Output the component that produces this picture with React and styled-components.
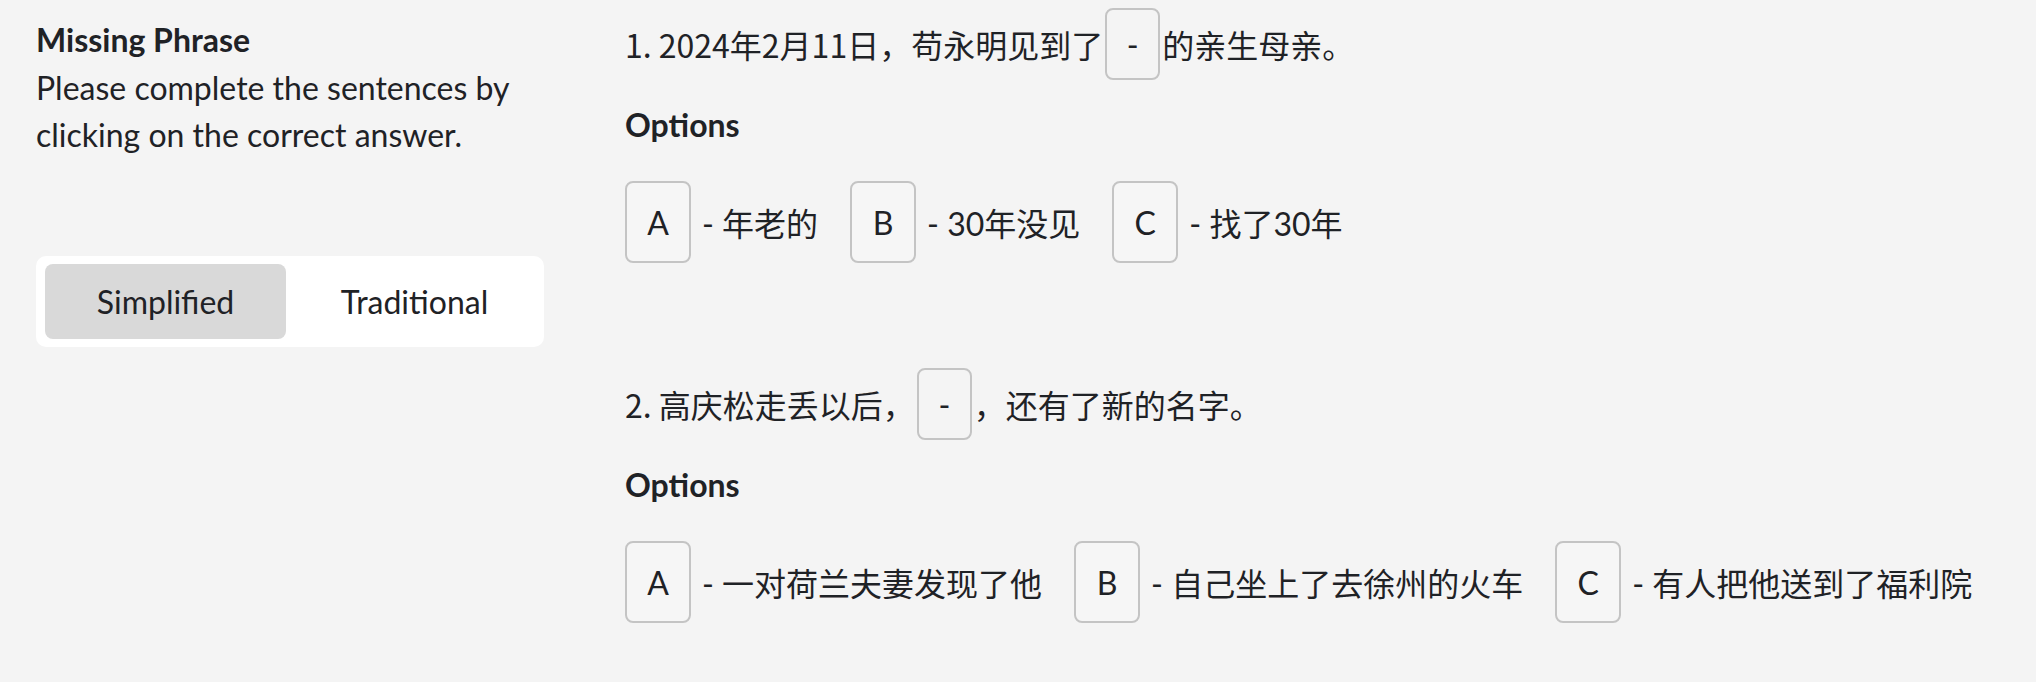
import React, { useState } from "react";
import styled, { createGlobalStyle } from "styled-components";

const GlobalStyle = createGlobalStyle`
  body {
    margin: 0;
    background: #f4f4f4;
    font-family: Lato, "Noto Sans CJK SC", sans-serif;
    color: #1f2226;
  }
`;

const questions = [
  {
    id: 1,
    before: "1. 2024年2月11日，苟永明见到了",
    after: "的亲生母亲。",
    options: [
      { key: "A", text: "- 年老的" },
      { key: "B", text: "- 30年没见" },
      { key: "C", text: "- 找了30年" },
    ],
  },
  {
    id: 2,
    before: "2. 高庆松走丢以后，",
    after: "，还有了新的名字。",
    options: [
      { key: "A", text: "- 一对荷兰夫妻发现了他" },
      { key: "B", text: "- 自己坐上了去徐州的火车" },
      { key: "C", text: "- 有人把他送到了福利院" },
    ],
  },
];

const Page = styled.div`
  display: flex;
  padding: 8px 0 0 36px;
  min-height: 682px;
  box-sizing: border-box;
`;

const Sidebar = styled.aside`
  width: 508px;
  flex-shrink: 0;
  padding-top: 12px;
`;

const Title = styled.h2`
  margin: 0;
  font-size: 32px;
  font-weight: 700;
  line-height: 40px;
`;

const Instructions = styled.p`
  margin: 4px 0 0;
  font-size: 32px;
  line-height: 47px;
`;

const Toggle = styled.div`
  margin-top: 98px;
  height: 91px;
  box-sizing: border-box;
  padding: 8px 9px;
  background: #fff;
  border-radius: 10px;
  display: grid;
  grid-template-columns: 1fr 1fr;
  gap: 8px;
`;

const ToggleButton = styled.button`
  border: 0;
  border-radius: 8px;
  background: ${(p) => (p.$active ? "#d9d9d9" : "transparent")};
  font: inherit;
  font-size: 32px;
  color: inherit;
  cursor: pointer;
`;

const Main = styled.main`
  margin-left: 81px;
`;

const Section = styled.section`
  & + & {
    margin-top: 105px;
  }
`;

const Question = styled.div`
  display: flex;
  align-items: center;
  height: 72px;
  font-family: "Liberation Sans Narrow", "Noto Sans CJK SC", Lato, sans-serif;
  font-size: 32px;
`;

const Blank = styled.span`
  width: 55px;
  height: 72px;
  margin: 0 2px;
  box-sizing: border-box;
  border: 2px solid #c4c4c4;
  border-radius: 8px;
  display: inline-flex;
  align-items: center;
  justify-content: center;
  font-family: Lato, sans-serif;
`;

const OptionsLabel = styled.h3`
  margin: 25px 0 0;
  font-size: 32px;
  font-weight: 700;
  line-height: 40px;
`;

const OptionRow = styled.div`
  margin-top: 36px;
  display: flex;
  gap: 32px;
`;

const Option = styled.div`
  display: flex;
  align-items: center;
  gap: 11px;
  font-size: 32px;
`;

const LetterBox = styled.button`
  width: 66px;
  height: 82px;
  box-sizing: border-box;
  border: 2px solid #c4c4c4;
  border-radius: 8px;
  background: #f6f6f6;
  font: inherit;
  font-size: 32px;
  color: inherit;
  cursor: pointer;
`;

export default function App() {
  const [script, setScript] = useState("simplified");

  return (
    <>
      <GlobalStyle />
      <Page>
        <Sidebar>
          <Title>Missing Phrase</Title>
          <Instructions>
            Please complete the sentences by clicking on the correct answer.
          </Instructions>
          <Toggle>
            <ToggleButton
              $active={script === "simplified"}
              onClick={() => setScript("simplified")}
            >
              Simplified
            </ToggleButton>
            <ToggleButton
              $active={script === "traditional"}
              onClick={() => setScript("traditional")}
            >
              Traditional
            </ToggleButton>
          </Toggle>
        </Sidebar>
        <Main>
          {questions.map((q) => (
            <Section key={q.id}>
              <Question>
                <span>{q.before}</span>
                <Blank>-</Blank>
                <span>{q.after}</span>
              </Question>
              <OptionsLabel>Options</OptionsLabel>
              <OptionRow>
                {q.options.map((o) => (
                  <Option key={o.key}>
                    <LetterBox>{o.key}</LetterBox>
                    <span>{o.text}</span>
                  </Option>
                ))}
              </OptionRow>
            </Section>
          ))}
        </Main>
      </Page>
    </>
  );
}
